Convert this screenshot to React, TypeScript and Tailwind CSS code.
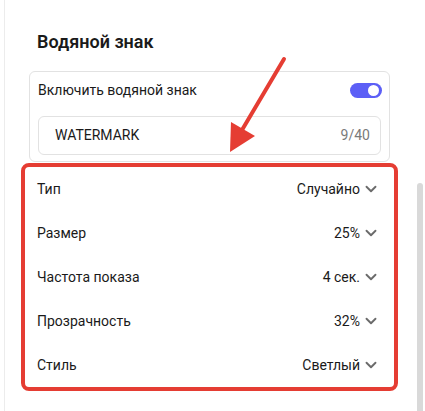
import { ChevronDown } from 'lucide-react'

const rows = [
  { label: 'Тип', value: 'Случайно' },
  { label: 'Размер', value: '25%' },
  { label: 'Частота показа', value: '4 сек.' },
  { label: 'Прозрачность', value: '32%' },
  { label: 'Стиль', value: 'Светлый' },
]

export default function App() {
  return (
    <div
      className="relative w-[425px] h-[411px] overflow-hidden bg-white text-[#1a1a1a]"
      style={{ fontFamily: 'Roboto, "Noto Sans", sans-serif' }}
    >
      <div className="ml-1 h-full border-l border-[#ececec]">
        <div className="ml-[24px] w-[361px] pt-[30px]">
          {/* Header */}
          <h2 className="pl-2 text-[18px] leading-6 font-semibold">Водяной знак</h2>

          {/* Watermark card */}
          <div className="mt-[17px] rounded-md border border-[#e2e2e2] px-2 pb-[6px]">
            <div className="flex h-9 items-center justify-between">
              <span className="text-[14px]">Включить водяной знак</span>
              <div className="mr-[-1px] flex h-[15px] w-[32px] items-center justify-end rounded-full bg-[#5c5ff6] pr-[3px]">
                <div className="h-[11px] w-[11px] rounded-full bg-white" />
              </div>
            </div>
            <div className="mt-2 flex h-[39px] items-center justify-between rounded-md border border-[#e2e2e2] pl-4 pr-[10px]">
              <span className="text-[14px]">WATERMARK</span>
              <span className="text-[14px] text-[#7a7a7a]">9/40</span>
            </div>
          </div>

          {/* Settings list, highlighted */}
          <div className="-mx-2 mt-px rounded-lg border-4 border-[#e53d33]">
            {rows.map((r) => (
              <div key={r.label} className="flex h-[44px] items-center justify-between pl-3 pr-[14px]">
                <span className="text-[14px]">{r.label}</span>
                <span className="flex items-center gap-[2px] text-[14px]">
                  {r.value}
                  <ChevronDown size={18} strokeWidth={2.5} className="text-[#6b6b6b]" />
                </span>
              </div>
            ))}
          </div>
        </div>
      </div>

      {/* Scrollbar thumb */}
      <div className="absolute left-[417px] top-[183px] h-[240px] w-[6px] rounded-t-full bg-[#d9d9d9]" />

      {/* Annotation arrow */}
      <svg className="absolute left-0 top-0 pointer-events-none" width="425" height="411">
        <line x1="284" y1="59" x2="242" y2="130" stroke="#e53d33" strokeWidth="4" strokeLinecap="round" />
        <polygon points="230,152 231,122 255,136" fill="#e53d33" />
      </svg>
    </div>
  )
}
